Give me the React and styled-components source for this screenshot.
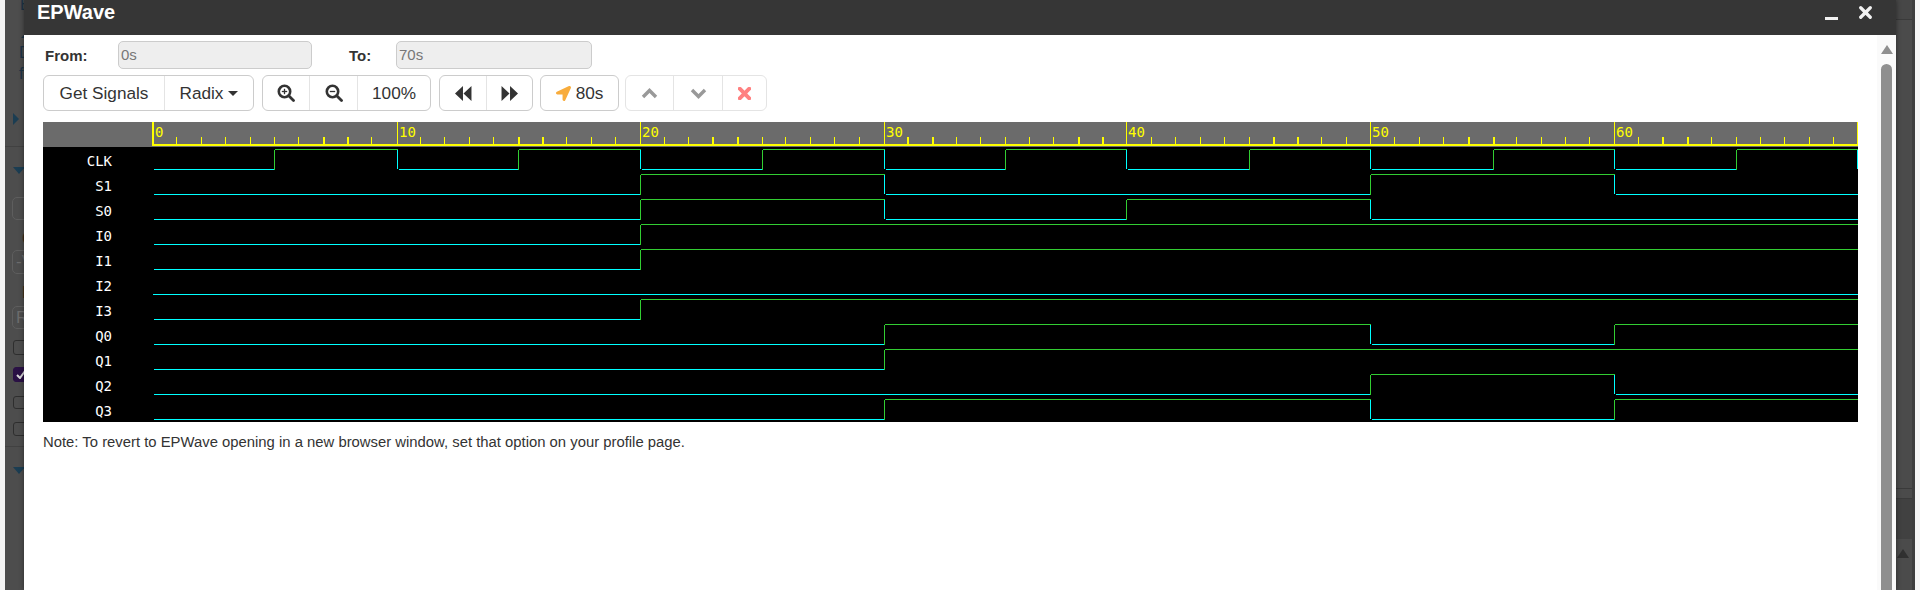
import React from "react";
import styled, { createGlobalStyle } from "styled-components";
import { FaLocationArrow } from "react-icons/fa";

const GlobalStyle = createGlobalStyle`
    html, body {
        margin: 0;
        padding: 0;
        background: #f5f5f5;
        overflow: hidden;
    }
    * {
        box-sizing: border-box;
    }
`;

const Page = styled.div`
    width: 1920px;
    height: 590px;
    display: flex;
    overflow: hidden;
    font-family: "Liberation Sans", Arial, sans-serif;
    color: #333;
`;

const LeftPage = styled.div`
    width: 19px;
    flex-shrink: 0;
    background: #4d4d4d;
    display: flex;
    flex-direction: column;
    overflow: hidden;
`;

const PageText = styled.div`
    margin-top: ${(p) => p.$mt}px;
    margin-left: ${(p) => p.$ml}px;
    height: ${(p) => p.$h}px;
    line-height: ${(p) => p.$h}px;
    font-size: 16px;
    color: ${(p) => p.$color || "#1d3346"};
    white-space: nowrap;
`;

const PageTriangleUp = styled.div`
    margin-top: ${(p) => p.$mt}px;
    margin-left: 16px;
    width: 0;
    border-left: 5px solid transparent;
    border-right: 5px solid transparent;
    border-bottom: 5px solid #1d3346;
`;

const PageTriangleRight = styled.div`
    margin-top: ${(p) => p.$mt}px;
    margin-left: 8px;
    width: 0;
    border-top: 6px solid transparent;
    border-bottom: 6px solid transparent;
    border-left: 6px solid #1b3d52;
`;

const PageTriangleDown = styled.div`
    margin-top: ${(p) => p.$mt}px;
    margin-left: 8px;
    width: 0;
    border-left: 6px solid transparent;
    border-right: 6px solid transparent;
    border-top: 7px solid #1b3d52;
`;

const PageRule = styled.div`
    margin-top: ${(p) => p.$mt}px;
    height: 1px;
    width: 100%;
    flex-shrink: 0;
    background: #414141;
`;

const PageField = styled.div`
    margin-top: ${(p) => p.$mt}px;
    margin-left: 7px;
    width: 60px;
    height: ${(p) => p.$h}px;
    flex-shrink: 0;
    border: 1px solid #5e5e5e;
    border-radius: 5px;
    padding-left: 3px;
    font-size: 17px;
    line-height: ${(p) => p.$h - 2}px;
    color: #6c6c6c;
`;

const PageCheck = styled.div`
    margin-top: ${(p) => p.$mt}px;
    margin-left: 8px;
    width: 16px;
    height: ${(p) => p.$h}px;
    flex-shrink: 0;
    border: 1px solid ${(p) => (p.$on ? "#2a1145" : "#2e2e2e")};
    border-radius: 3px;
    background: ${(p) => (p.$on ? "#2a1145" : "transparent")};
    display: flex;
    align-items: center;
    justify-content: center;
`;

const Dialog = styled.div`
    flex: 1;
    min-width: 0;
    display: flex;
    flex-direction: column;
    position: relative;
    z-index: 1;
    background: #fff;
    box-shadow: 0 0 5px rgba(0, 0, 0, 0.45);
`;

const TitleBar = styled.div`
    height: 35px;
    flex-shrink: 0;
    background: #363636;
    display: flex;
    align-items: flex-start;
    padding: 0 24px 0 13px;
`;

const Title = styled.div`
    flex: 1;
    font-size: 20px;
    font-weight: bold;
    line-height: 25px;
    color: #fff;
`;

const Minimize = styled.div`
    width: 13px;
    height: 3px;
    margin: 17px 21px 0 0;
    background: #f2f2f2;
`;

const CloseButton = styled.div`
    display: flex;
    margin-top: 6px;
`;

const DialogBody = styled.div`
    flex: 1;
    min-height: 0;
    display: flex;
`;

const Content = styled.div`
    flex: 1;
    min-width: 0;
    padding: 6px 19px 0;
    display: flex;
    flex-direction: column;
`;

const RangeRow = styled.div`
    display: flex;
    align-items: center;
    height: 28px;
`;

const RangeLabel = styled.label`
    width: ${(p) => p.$w}px;
    margin-left: ${(p) => p.$ml}px;
    font-size: 15px;
    font-weight: bold;
    color: #333;
`;

const RangeInput = styled.div`
    width: ${(p) => p.$w}px;
    height: 28px;
    background: #eee;
    border: 1px solid #ccc;
    border-radius: 5px;
    padding-left: 2px;
    font-size: 15px;
    line-height: 26px;
    color: #777;
`;

const Toolbar = styled.div`
    display: flex;
    height: 36px;
    margin-top: 6px;
`;

const ButtonGroup = styled.div`
    display: flex;
    margin-left: ${(p) => p.$ml || 0}px;
    border: 1px solid ${(p) => (p.$muted ? "#e4e4e4" : "#ccc")};
    border-radius: 6px;
    background: #fff;
`;

const Button = styled.div`
    width: ${(p) => p.$w}px;
    display: flex;
    align-items: center;
    justify-content: center;
    gap: ${(p) => p.$gap || 0}px;
    font-size: 17.2px;
    color: #333;
    white-space: nowrap;
    & + & {
        border-left: 1px solid ${(p) => (p.$muted ? "#e4e4e4" : "#ccc")};
    }
`;

const Caret = styled.span`
    width: 0;
    margin-left: 5px;
    border-left: 5px solid transparent;
    border-right: 5px solid transparent;
    border-top: 5px solid #333;
`;

const WaveView = styled.div`
    margin-top: 11px;
    background: #000;
    display: flex;
    flex-direction: column;
`;

const RulerRow = styled.div`
    height: 25px;
    background: #6b6b6b;
    padding-left: 109px;
    display: flex;
`;

const RulerSvg = styled.svg`
    display: block;
    shape-rendering: crispEdges;
`;

const RulerLabel = styled.text`
    font-family: "DejaVu Sans Mono", monospace;
    font-size: 14px;
    fill: #ffff00;
`;

const SignalRow = styled.div`
    height: 25px;
    display: flex;
`;

const SignalName = styled.div`
    width: 110px;
    padding: 5px 41px 0 0;
    font-family: "DejaVu Sans Mono", monospace;
    font-size: 14px;
    line-height: 18px;
    text-align: right;
    color: #fff;
`;

const WaveSvg = styled.svg`
    display: block;
    shape-rendering: crispEdges;
`;

const Note = styled.p`
    margin: 12px 0 0;
    font-size: 14.85px;
    line-height: 16px;
    color: #333;
`;

const ScrollTrack = styled.div`
    width: 19px;
    flex-shrink: 0;
    background: #fafafa;
    display: flex;
    flex-direction: column;
    align-items: center;
    padding-top: 10px;
`;

const ScrollArrow = styled.div`
    width: 0;
    border-left: 6.5px solid transparent;
    border-right: 6.5px solid transparent;
    border-bottom: 9px solid #8f8f8f;
`;

const ScrollThumb = styled.div`
    flex: 1;
    width: 11px;
    margin-top: 10px;
    background: #8f8f8f;
    border-radius: 6px 6px 0 0;
`;

const RightPage = styled.div`
    width: 19px;
    flex-shrink: 0;
    background: #4b4b4b;
    border-right: 3px solid #3e3e3e;
    display: flex;
    flex-direction: column;
`;

const RightBlock = styled.div`
    height: ${(p) => p.$h}px;
    flex-shrink: 0;
    background: ${(p) => p.$bg || "#4b4b4b"};
    border-bottom: ${(p) => (p.$line ? "1px solid #3a3a3a" : "none")};
`;

const RightArrow = styled.div`
    margin: 10px 0 0 1px;
    width: 0;
    border-left: 6px solid transparent;
    border-right: 6px solid transparent;
    border-bottom: 9px solid #303030;
`;

const PageEdge = styled.div`
    width: 5px;
    flex-shrink: 0;
    background: #f5f5f5;
`;

const Magnifier = ({ plus }) => (
    <svg width="18" height="18" viewBox="0 0 18 18" fill="none">
        <circle cx="7.5" cy="7.5" r="5.7" stroke="#333" strokeWidth="2.6" />
        <path d="M12 12l4.5 4.5" stroke="#333" strokeWidth="2.8" strokeLinecap="round" />
        <path d="M4.8 7.5h5.4" stroke="#333" strokeWidth="1.3" />
        {plus && <path d="M7.5 4.8v5.4" stroke="#333" strokeWidth="1.3" />}
    </svg>
);

const DoubleArrow = ({ flip }) => (
    <svg width="17" height="15" viewBox="0 0 16 14" style={flip ? { transform: "scaleX(-1)" } : undefined}>
        <path d="M0 7L7.5 0V14ZM8 7L15.5 0V14Z" fill="#333" />
    </svg>
);

const Chevron = ({ down }) => (
    <svg width="17" height="11" viewBox="0 0 17 11" fill="none">
        <path d={down ? "M2 2l6.5 6.5L15 2" : "M2 9l6.5-6.5L15 9"} stroke="#999" strokeWidth="3.4" />
    </svg>
);

const Cross = ({ size, color, weight }) => (
    <svg width={size} height={size} viewBox="0 0 12 12" fill="none">
        <path d="M1.6 1.6l8.8 8.8M10.4 1.6l-8.8 8.8" stroke={color} strokeWidth={weight} strokeLinecap="round" />
    </svg>
);

// pixel column of every 5 time units, relative to the wave area
const EDGES = [153, 274, 397, 518, 640, 762, 884, 1005, 1126, 1249, 1370, 1493, 1614, 1736, 1857].map((x) => x - 153);
const edgeX = (t) => EDGES[t / 5];

const BOLD_TICKS = [7, 8, 15, 16, 23, 24, 31, 32, 38, 39, 46, 47, 54, 55, 62, 63];
const WAVE_W = 1705;
const LOW = 22.5;
const HIGH = 2.5;

const clock = [0, 1, 0, 1, 0, 1, 0, 1, 0, 1, 0, 1, 0, 1, 0].map((v, i) => [i * 5, v]);

// each signal: [time, level] from that time on
const SIGNALS = [
    { name: "CLK", steps: clock },
    { name: "S1", steps: [[0, 0], [20, 1], [30, 0], [50, 1], [60, 0]] },
    { name: "S0", steps: [[0, 0], [20, 1], [30, 0], [40, 1], [50, 0]] },
    { name: "I0", steps: [[0, 0], [20, 1]] },
    { name: "I1", steps: [[0, 0], [20, 1]] },
    { name: "I2", steps: [[0, 0]], from: 0 },
    { name: "I3", steps: [[0, 0], [20, 1]] },
    { name: "Q0", steps: [[0, 0], [30, 1], [50, 0], [60, 1]] },
    { name: "Q1", steps: [[0, 0], [30, 1]] },
    { name: "Q2", steps: [[0, 0], [50, 1], [60, 0]] },
    { name: "Q3", steps: [[0, 0], [30, 1], [50, 0], [60, 1]] },
];

const Wave = ({ steps, from = 1 }) => {
    let green = "";
    let cyan = "";
    steps.forEach(([t, level], i) => {
        const next = steps[i + 1];
        const x = edgeX(t);
        const end = next ? edgeX(next[0]) : WAVE_W;
        if (level) {
            green += `M${x + 0.5} ${LOW + 0.5}V${HIGH}`;
            green += `M${x + 1} ${HIGH}H${end + 1}`;
        } else if (i === 0) {
            cyan += `M${from} ${LOW}H${end + 1}`;
        } else {
            cyan += `M${x + 0.5} ${HIGH - 0.5}V${LOW - 1}`;
            cyan += `M${x + 2} ${LOW}H${end + 1}`;
        }
    });
    return (
        <WaveSvg width={WAVE_W} height="25">
            <path d={cyan} stroke="#00ffff" fill="none" />
            <path d={green} stroke="#32cd32" fill="none" />
        </WaveSvg>
    );
};

const Ruler = () => {
    const ticks = [];
    for (let t = 0; t <= 70; t++) {
        const major = t % 10 === 0;
        const x = t % 5 === 0 ? edgeX(t) : Math.floor(152.6 + 24.36 * t) - 153;
        const wide = BOLD_TICKS.includes(t) || t === 0;
        ticks.push(
            <rect key={t} x={x + 1 - (t === 0 ? 1 : 0)} y={major ? 0 : 15} width={wide ? 2 : 1} height={major ? 23 : 8} fill="#ffff00" />
        );
        if (major && t < 70) {
            ticks.push(<RulerLabel key={`l${t}`} x={x + 3} y="15">{t}</RulerLabel>);
        }
    }
    return (
        <RulerSvg width="1706" height="25">
            {ticks}
            <rect x="0" y="22" width="1706" height="2" fill="#ffff00" />
        </RulerSvg>
    );
};

const App = () => {
    return (
        <Page>
            <GlobalStyle />
            <PageEdge />
            <LeftPage>
                <PageText $mt={0} $ml={15} $h={10}>E</PageText>
                <PageTriangleUp $mt={23} />
                <PageText $mt={11} $ml={14} $h={8}>D</PageText>
                <PageText $mt={13} $ml={14} $h={8}>fr</PageText>
                <PageTriangleRight $mt={35} />
                <PageRule $mt={21} />
                <PageTriangleDown $mt={20} />
                <PageField $mt={23} $h={23} />
                <PageText $mt={15} $ml={17} $h={8} $color="#3d2a1a">C</PageText>
                <PageField $mt={7} $h={24}>-V</PageField>
                <PageText $mt={12} $ml={17} $h={13} $color="#3d2a1a">E</PageText>
                <PageField $mt={7} $h={23}>R</PageField>
                <PageCheck $mt={11} $h={15} />
                <PageCheck $mt={12} $h={15} $on>
                    <svg width="10" height="9" viewBox="0 0 10 9">
                        <path d="M1 5l3 3 5-7" stroke="#d8d8d8" strokeWidth="2" fill="none" />
                    </svg>
                </PageCheck>
                <PageCheck $mt={14} $h={13} />
                <PageCheck $mt={13} $h={14} />
                <PageRule $mt={10} />
                <PageTriangleDown $mt={20} />
            </LeftPage>
            <Dialog>
                <TitleBar>
                    <Title>EPWave</Title>
                    <Minimize />
                    <CloseButton>
                        <Cross size={13} color="#f2f2f2" weight={3} />
                    </CloseButton>
                </TitleBar>
                <DialogBody>
                    <Content>
                        <RangeRow>
                            <RangeLabel $w={73} $ml={2}>From:</RangeLabel>
                            <RangeInput $w={194}>0s</RangeInput>
                            <RangeLabel $w={47} $ml={37}>To:</RangeLabel>
                            <RangeInput $w={196}>70s</RangeInput>
                        </RangeRow>
                        <Toolbar>
                            <ButtonGroup>
                                <Button $w={120}>Get Signals</Button>
                                <Button $w={89}>Radix<Caret /></Button>
                            </ButtonGroup>
                            <ButtonGroup $ml={8}>
                                <Button $w={46}><Magnifier plus /></Button>
                                <Button $w={48}><Magnifier /></Button>
                                <Button $w={73}>100%</Button>
                            </ButtonGroup>
                            <ButtonGroup $ml={8}>
                                <Button $w={46}><DoubleArrow /></Button>
                                <Button $w={46}><DoubleArrow flip /></Button>
                            </ButtonGroup>
                            <ButtonGroup $ml={7}>
                                <Button $w={77} $gap={5}><FaLocationArrow size={15} color="#f8ac3c" />80s</Button>
                            </ButtonGroup>
                            <ButtonGroup $ml={6} $muted>
                                <Button $w={47} $muted><Chevron /></Button>
                                <Button $w={49} $muted><Chevron down /></Button>
                                <Button $w={44} $muted><Cross size={13} color="#ff8080" weight={3.6} /></Button>
                            </ButtonGroup>
                        </Toolbar>
                        <WaveView>
                            <RulerRow>
                                <Ruler />
                            </RulerRow>
                            {SIGNALS.map((s) => (
                                <SignalRow key={s.name}>
                                    <SignalName>{s.name}</SignalName>
                                    <Wave steps={s.steps} from={s.from} />
                                </SignalRow>
                            ))}
                        </WaveView>
                        <Note>Note: To revert to EPWave opening in a new browser window, set that option on your profile page.</Note>
                    </Content>
                    <ScrollTrack>
                        <ScrollArrow />
                        <ScrollThumb />
                    </ScrollTrack>
                </DialogBody>
            </Dialog>
            <RightPage>
                <RightBlock $h={20} $bg="#474747" $line />
                <RightBlock $h={469} $line />
                <RightBlock $h={10} $line />
                <RightBlock $h={40} $bg="#414141" />
                <RightArrow />
            </RightPage>
            <PageEdge />
        </Page>
    );
};

export default App;
